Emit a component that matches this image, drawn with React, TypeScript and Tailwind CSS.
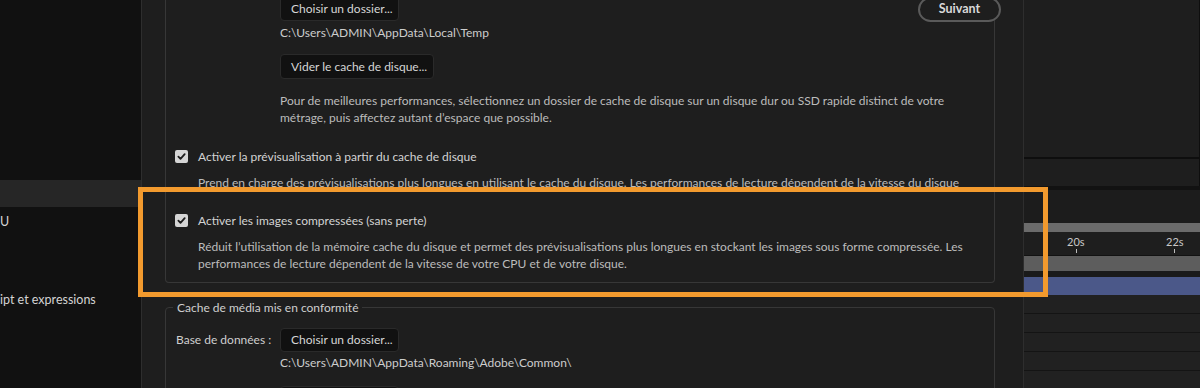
import React from 'react';

const Check: React.FC = () => (
  <span className="flex h-[13px] w-[13px] shrink-0 items-center justify-center rounded-[2px] bg-[#d5d5d5]">
    <svg width="9" height="9" viewBox="0 0 9 9">
      <path d="M1.4 4.7 3.5 6.8 7.7 2.2" fill="none" stroke="#1b1b1b" strokeWidth="1.8" strokeLinecap="round" strokeLinejoin="round" />
    </svg>
  </span>
);

const Btn: React.FC<{ className: string; children?: React.ReactNode }> = ({ className, children }) => (
  <div
    className={`flex items-center rounded-[4px] border border-[#2a2a2a] bg-[#111111] px-[10px] whitespace-nowrap text-[#d6d6d6] ${className}`}
  >
    {children}
  </div>
);

const App: React.FC = () => {
  return (
    <div className="relative flex h-[388px] w-[1200px] overflow-hidden bg-[#111111] font-[Lato,sans-serif] text-[12px]">
      {/* project panel behind the dialog */}
      <div className="flex w-[141px] shrink-0 flex-col bg-[#111111] text-[12.5px] text-[#d4d4d4]">
        <div className="h-[180px]" />
        <div className="h-[27px] bg-[#262626]" />
        <div className="mt-[6px] leading-[18px]">U</div>
        <div className="mt-[60px] whitespace-nowrap leading-[18px]">ipt et expressions</div>
      </div>

      {/* preferences dialog */}
      <div className="relative w-[883px] shrink-0 border-x border-[#2e2e2e] bg-[#1e1e1e] pl-[23px] pr-[28px]">
        <div className="mt-[-4px] rounded-b-[4px] border-x border-b border-[#373737] pb-[10px]">
          <div className="pl-[114px]">
            <Btn className="h-[25px] w-[119px]">Choisir un dossier...</Btn>
            <div className="mt-[3px] leading-[17px] text-[#cdcdcd]">{'C:\\Users\\ADMIN\\AppData\\Local\\Temp'}</div>
            <Btn className="mt-[13px] h-[25px] w-[154px]">Vider le cache de disque...</Btn>
            <p className="mt-[13px] whitespace-nowrap leading-[17px] text-[#bcbcbc]">
              Pour de meilleures performances, sélectionnez un dossier de cache de disque sur un disque dur ou SSD rapide distinct de votre
              <br />
              métrage, puis affectez autant d’espace que possible.
            </p>
          </div>

          <div className="mt-[22px] flex items-center gap-[10px] pl-[9px] leading-[17px] text-[#d3d3d3]">
            <Check />
            Activer la prévisualisation à partir du cache de disque
          </div>
          <p className="mt-[9px] overflow-hidden whitespace-nowrap pl-[32px] leading-[17px] text-[#bcbcbc]">
            Prend en charge des prévisualisations plus longues en utilisant le cache du disque. Les performances de lecture dépendent de la vitesse du disque
          </p>

          <div className="mt-[21px] flex items-center gap-[10px] pl-[9px] leading-[17px] text-[#d3d3d3]">
            <Check />
            Activer les images compressées (sans perte)
          </div>
          <p className="mt-[9px] whitespace-nowrap pl-[32px] leading-[17px] text-[#bcbcbc]">
            Réduit l’utilisation de la mémoire cache du disque et permet des prévisualisations plus longues en stockant les images sous forme compressée. Les
            <br />
            performances de lecture dépendent de la vitesse de votre CPU et de votre disque.
          </p>
        </div>

        <fieldset className="mt-[16px] rounded-[4px] border border-[#373737] pb-[20px]">
          <legend className="ml-[7px] px-[4px] leading-[17px] text-[#cfcfcf]">Cache de média mis en conformité</legend>
          <div className="mt-[12px] flex">
            <div className="w-[114px] pl-[10px] leading-[24px] whitespace-nowrap text-[#cfcfcf]">Base de données :</div>
            <div>
              <Btn className="h-[24px] w-[119px]">Choisir un dossier...</Btn>
              <div className="mt-[2px] leading-[17px] text-[#cdcdcd]">{'C:\\Users\\ADMIN\\AppData\\Roaming\\Adobe\\Common\\'}</div>
              <Btn className="mt-[15px] h-[24px] w-[119px]" />
            </div>
          </div>
        </fieldset>

        <div className="absolute left-[776px] top-[-3px] flex h-[25px] w-[83px] items-center justify-center rounded-full border-2 border-[#5a5a5a] bg-[#1e1e1e] text-[12.5px] font-bold text-[#d9d9d9]">
          Suivant
        </div>
      </div>

      {/* composition + timeline behind the dialog */}
      <div className="flex flex-1 flex-col">
        <div className="h-[159px] border-b-2 border-r border-[#0e0e0e] bg-[#1e1e1e]" />
        <div className="h-[27px] border-r border-[#0e0e0e] bg-[#1e1e1e]" />
        <div className="h-[4px] bg-[#121212]" />
        <div className="flex flex-1 flex-col bg-[#1c1c1c]">
          <div className="h-[33px]" />
          <div className="h-[9px] bg-[#6b6b6b]" />
          <div className="relative h-[23px] bg-[#1e1e1e] text-[11px] text-[#c8c8c8]">
            <span className="absolute left-[43px] top-[3px] leading-[14px]">20s</span>
            <span className="absolute left-[52px] top-[17px] h-[4px] w-px bg-[#bdbdbd]" />
            <span className="absolute left-[142px] top-[3px] leading-[14px]">22s</span>
            <span className="absolute left-[150px] top-[17px] h-[4px] w-px bg-[#bdbdbd]" />
          </div>
          <div className="h-px bg-[#121212]" />
          <div className="h-[15px] bg-[#5d5d5d]" />
          <div className="h-[6px] bg-[#1a1a1a]" />
          <div className="h-[18px] bg-[#4b5889]" />
          <div className="h-[19px] border-b border-[#141414] bg-[#212121]" />
          <div className="h-[19px] border-b border-[#141414] bg-[#212121]" />
          <div className="h-[19px] border-b border-[#141414] bg-[#212121]" />
          <div className="h-[19px] border-b border-[#141414] bg-[#212121]" />
          <div className="flex-1 bg-[#212121]" />
        </div>
      </div>

      {/* highlight */}
      <div className="absolute left-[138px] top-[187px] h-[110px] w-[910px] border-[5px] border-[#f29a2e]" />
    </div>
  );
};

export default App;
